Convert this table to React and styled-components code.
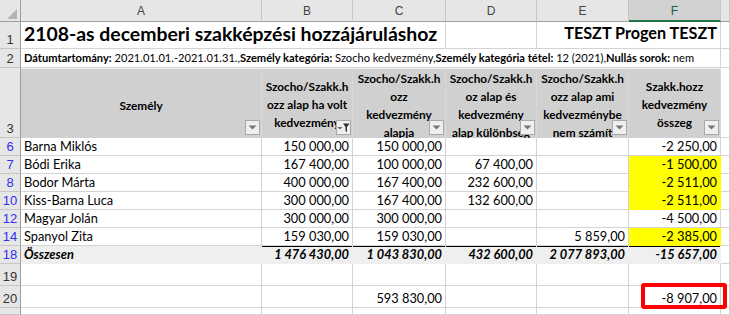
import React from 'react';
import styled, { createGlobalStyle } from 'styled-components';

const COLS = '21px 241px 91px 93px 91px 92px 92px 1fr';
const GRID = '#d4d4d4';
const HEAD_BG = '#e6e6e6';
const HEAD_LINE = '#c6c6c6';
const HEAD_EDGE = '#9e9e9e';

const Global = createGlobalStyle`
  html, body { margin: 0; padding: 0; background: #fff; overflow: hidden; }
  #root { width: 730px; height: 315px; overflow: hidden; }
`;

const Sheet = styled.div`
  display: flex;
  flex-direction: column;
  width: 730px;
  height: 315px;
  overflow: hidden;
  font-family: Lato, "Open Sans", sans-serif;
  color: #000;
  background: #fff;
`;

const Row = styled.div`
  display: grid;
  grid-template-columns: ${COLS};
  height: ${(p) => p.$h}px;
  flex: ${(p) => (p.$grow ? '1 1 auto' : 'none')};
`;

const Corner = styled.div`
  background: ${HEAD_BG};
  border-right: 1px solid ${HEAD_EDGE};
  border-bottom: 1px solid ${HEAD_EDGE};
  display: flex;
  align-items: flex-end;
  justify-content: flex-end;
  padding: 0 3px 2px 0;
`;

const ColHead = styled.div`
  background: ${(p) => (p.$active ? '#d2d2d2' : HEAD_BG)};
  border-right: 1px solid ${HEAD_LINE};
  border-bottom: ${(p) => (p.$active ? '2px solid #217346' : `1px solid ${HEAD_EDGE}`)};
  font-family: "Liberation Sans", Arial, sans-serif;
  font-size: 12px;
  color: ${(p) => (p.$active ? '#1f5c3a' : '#444')};
  display: flex;
  align-items: center;
  justify-content: center;
  padding-top: 1px;
`;

const RowHead = styled.div`
  background: ${HEAD_BG};
  border-right: 1px solid ${HEAD_EDGE};
  border-bottom: 1px solid ${HEAD_LINE};
  font-family: "Liberation Sans", Arial, sans-serif;
  font-size: 13px;
  color: ${(p) => (p.$filtered ? '#2f2ff5' : '#333')};
  display: flex;
  align-items: flex-end;
  justify-content: center;
  padding-bottom: 1px;
  line-height: 15px;
`;

const Cell = styled.div`
  grid-column: span ${(p) => p.$span || 1};
  background: ${(p) => p.$fill || '#fff'};
  border-right: 1px solid ${(p) => (p.$fill ? p.$fill : GRID)};
  border-bottom: 1px solid ${(p) => (p.$fill ? p.$fill : GRID)};
  box-shadow: ${(p) => (p.$rule ? 'inset 0 1px 0 #000' : 'none')};
  display: flex;
  align-items: flex-end;
  justify-content: ${(p) => (p.$right ? 'flex-end' : 'flex-start')};
  padding: 0 ${(p) => (p.$right ? 3 : 2)}px 1px 3px;
  font-size: 12.8px;
  line-height: 16px;
  font-weight: ${(p) => (p.$bold ? 700 : 400)};
  font-style: ${(p) => (p.$italic ? 'italic' : 'normal')};
  white-space: nowrap;
  overflow: ${(p) => (p.$visible ? 'visible' : 'hidden')};
  position: relative;
  z-index: ${(p) => (p.$visible ? 2 : 'auto')};
  min-width: 0;
`;

const Title = styled.span`
  font-size: ${(p) => p.$size}px;
  font-weight: 700;
  line-height: 26px;
  padding-bottom: ${(p) => p.$pb || 0}px;
`;

const Info = styled.span`
  font-size: 11.12px;
  line-height: 16px;
  b { font-weight: 700; }
`;

const HeadCell = styled.div`
  position: relative;
  background: #d0d0d0;
  border-right: 1px solid #d8d8d8;
  border-top: 1px solid #f4f4f4;
  display: flex;
  flex-direction: column;
  align-items: center;
  justify-content: center;
  overflow: hidden;
  font-size: 11.8px;
  font-weight: 700;
  line-height: 18px;
  text-align: center;
  white-space: nowrap;
  padding-top: ${(p) => p.$shift || 0}px;
`;

const FilterBtn = styled.div`
  position: absolute;
  right: 1px;
  bottom: 3px;
  width: 15px;
  height: 15px;
  box-sizing: border-box;
  background: #efefef;
  border: 1px solid #a9a9a9;
  display: flex;
  align-items: center;
  justify-content: center;
`;

const RedBox = styled.div`
  position: absolute;
  left: 12px;
  right: -7px;
  top: -3px;
  bottom: -2px;
  border: 4px solid #ff0000;
  border-radius: 3px;
  pointer-events: none;
`;

const Num = styled.span`
  position: relative;
`;

function Filter({ active }) {
  return (
    <FilterBtn>
      {active ? (
        <svg width="13" height="11" viewBox="0 0 13 11">
          <polygon points="0.5,5 5.5,5 3,7.5" fill="#666" />
          <polygon points="6,1.5 12.5,1.5 10,5 10,10 8.5,9 8.5,5" fill="#333" />
        </svg>
      ) : (
        <svg width="9" height="5" viewBox="0 0 9 5">
          <polygon points="0.5,0.5 8.5,0.5 4.5,4.5" fill="#777" />
        </svg>
      )}
    </FilterBtn>
  );
}

const DATA = [
  { n: 6, name: 'Barna Miklós', b: '150 000,00', c: '150 000,00', d: '', e: '', f: '-2 250,00', y: false },
  { n: 7, name: 'Bódi Erika', b: '167 400,00', c: '100 000,00', d: '67 400,00', e: '', f: '-1 500,00', y: true },
  { n: 8, name: 'Bodor Márta', b: '400 000,00', c: '167 400,00', d: '232 600,00', e: '', f: '-2 511,00', y: true },
  { n: 10, name: 'Kiss-Barna Luca', b: '300 000,00', c: '167 400,00', d: '132 600,00', e: '', f: '-2 511,00', y: true },
  { n: 12, name: 'Magyar Jolán', b: '300 000,00', c: '300 000,00', d: '', e: '', f: '-4 500,00', y: false },
  { n: 14, name: 'Spanyol Zita', b: '159 030,00', c: '159 030,00', d: '', e: '5 859,00', f: '-2 385,00', y: true },
];

const HEADERS = [
  { lines: ['Személy'], shift: 4 },
  { lines: ['Szocho/Szakk.h', 'ozz alap ha volt', 'kedvezmény'], active: true, shift: 2 },
  { lines: ['Szocho/Szakk.h', 'ozz', 'kedvezmény', 'alapja'], shift: 4 },
  { lines: ['Szocho/Szakk.h', 'oz alap és', 'kedvezmény', 'alap különbség'], shift: 4 },
  { lines: ['Szocho/Szakk.h', 'ozz alap ami', 'kedvezménybe', 'nem számít'], shift: 4 },
  { lines: ['Szakk.hozz', 'kedvezmény', 'összeg'], shift: 2 },
];

export default function App() {
  return (
    <>
      <Global />
      <Sheet>
        <Row $h={22}>
          <Corner>
            <svg width="10" height="10" viewBox="0 0 10 10">
              <polygon points="10,0 10,10 0,10" fill="#b4b4b4" />
            </svg>
          </Corner>
          {['A', 'B', 'C', 'D', 'E', 'F', ''].map((l, i) => (
            <ColHead key={i} $active={l === 'F'}>{l}</ColHead>
          ))}
        </Row>

        <Row $h={27}>
          <RowHead>1</RowHead>
          <Cell $span={3}>
            <Title $size={19.4}>2108-as decemberi szakképzési hozzájáruláshoz</Title>
          </Cell>
          <Cell />
          <Cell $span={2} $right>
            <Title $size={16.2} $pb={1}>TESZT Progen TESZT</Title>
          </Cell>
          <Cell />
        </Row>

        <Row $h={19}>
          <RowHead>2</RowHead>
          <Cell $span={6}>
            <Info>
              <b>Dátumtartomány:</b>{' 2021.01.01.-2021.01.31.,'}<b>Személy kategória:</b>{' Szocho kedvezmény,'}<b>Személy kategória tétel:</b>{' 12 (2021),'}<b>Nullás sorok:</b>{' nem'}
            </Info>
          </Cell>
          <Cell />
        </Row>

        <Row $h={70}>
          <RowHead>3</RowHead>
          {HEADERS.map((h, i) => (
            <HeadCell key={i} $shift={h.shift}>
              {h.lines.map((t, j) => (
                <span key={j}>{t}</span>
              ))}
              <Filter active={h.active} />
            </HeadCell>
          ))}
          <Cell />
        </Row>

        {DATA.map((r) => (
          <Row $h={18} key={r.n}>
            <RowHead $filtered>{r.n}</RowHead>
            <Cell>{r.name}</Cell>
            <Cell $right>{r.b}</Cell>
            <Cell $right>{r.c}</Cell>
            <Cell $right>{r.d}</Cell>
            <Cell $right>{r.e}</Cell>
            <Cell $right $fill={r.y ? '#ffff00' : undefined}>{r.f}</Cell>
            <Cell />
          </Row>
        ))}

        <Row $h={18}>
          <RowHead $filtered>18</RowHead>
          <Cell $fill="#efefef" $bold $italic>Összesen</Cell>
          <Cell $fill="#efefef" $bold $italic $right $rule>1 476 430,00</Cell>
          <Cell $fill="#efefef" $bold $italic $right $rule>1 043 830,00</Cell>
          <Cell $fill="#efefef" $bold $italic $right $rule>432 600,00</Cell>
          <Cell $fill="#efefef" $bold $italic $right $rule>2 077 893,00</Cell>
          <Cell $fill="#efefef" $bold $italic $right $rule>-15 657,00</Cell>
          <Cell />
        </Row>

        <Row $h={22}>
          <RowHead>19</RowHead>
          <Cell />
          <Cell />
          <Cell />
          <Cell />
          <Cell />
          <Cell />
          <Cell />
        </Row>

        <Row $h={22}>
          <RowHead>20</RowHead>
          <Cell />
          <Cell />
          <Cell $right>593 830,00</Cell>
          <Cell />
          <Cell />
          <Cell $right $visible>
            <Num>-8 907,00</Num>
            <RedBox />
          </Cell>
          <Cell />
        </Row>

        <Row $h={10} $grow>
          <RowHead />
          <Cell />
          <Cell />
          <Cell />
          <Cell />
          <Cell />
          <Cell />
          <Cell />
        </Row>
      </Sheet>
    </>
  );
}
